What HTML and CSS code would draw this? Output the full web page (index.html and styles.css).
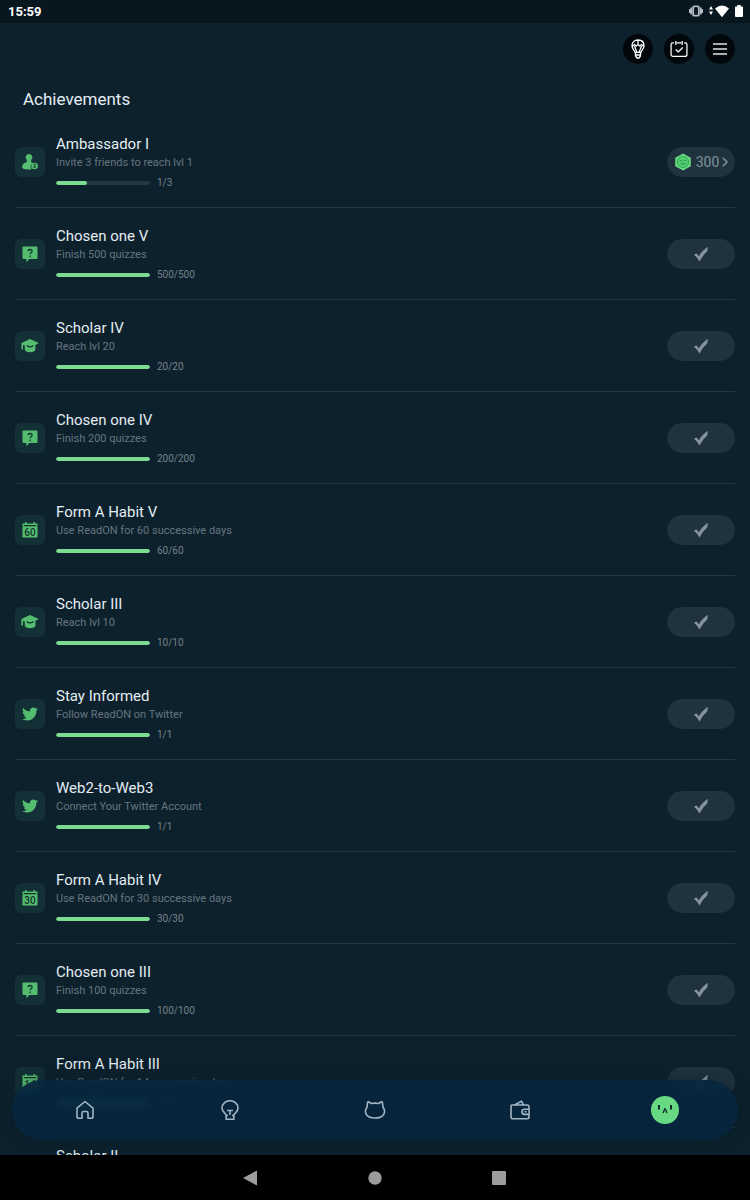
FILE: index.html
```html
<!DOCTYPE html>
<html lang="en">
<head>
<meta charset="utf-8">
<meta name="viewport" content="width=device-width, initial-scale=1">
<title>Achievements</title>
<link rel="stylesheet" href="styles.css">
</head>
<body>
<svg class="sprite" aria-hidden="true">
  <symbol id="person" viewBox="0 0 16 16">
    <path fill="currentColor" d="M7 0a3.400 3.400 0 0 1 2.400 5.800L9 8c1 .3 1.800.6 2.400 1a3.600 3.600 0 0 0-1.600 6.200C3 15.800.1 15 .1 13c0-2.600 1.800-4.200 4.900-5l-.4-2.200A3.400 3.400 0 0 1 7 0z"/>
    <circle cx="12.600" cy="12" r="3.300" fill="currentColor"/>
    <path d="M11.500 11c.2-1.100 2-1 2 .1 0 .8-1.300.8-2 2.100h2.200" fill="none" stroke="#123229"/>
  </symbol>
  <symbol id="quiz" viewBox="0 0 16 16">
    <path fill="currentColor" d="M1.500.5h13a1 1 0 0 1 1 1v10.500a1 1 0 0 1-1 1H7.500L4.300 16v-3H1.500a1 1 0 0 1-1-1V1.500a1 1 0 0 1 1-1z"/>
    <path d="M6 5.100c.2-2.200 4.200-2.100 4.100.2 0 1.500-2 1.400-2 3" fill="none" stroke="#123229" stroke-width="1.300"/>
    <circle cx="8.100" cy="10.300" r=".8" fill="#123229"/>
  </symbol>
  <symbol id="scholar" viewBox="0 0 18 16">
    <path fill="currentColor" d="M9 1 17.800 5 14.400 7v4.500C14.400 15 3.800 15 3.800 11.500V7.500L2 7v4.500H.4V5z"/>
    <path d="M5.800 7.500Q9 10.300 12.400 7.500" fill="none" stroke="#123229" stroke-width="1.200"/>
  </symbol>
  <symbol id="calendar" viewBox="0 0 16 16">
    <path fill="currentColor" d="M3 0h1.500v1.500h7V0H13v1.500h2.500v3.200H.5V1.500H3zM.5 5h15v10.500H.5z"/>
    <path d="M2 3.500h12" stroke="#123229"/>
  </symbol>
  <symbol id="bird" viewBox="0 0 24 24">
    <path fill="currentColor" d="M23.953 4.570a10 10 0 01-2.825.775 4.958 4.958 0 002.163-2.723c-.951.555-2.005.959-3.127 1.184a4.920 4.920 0 00-8.384 4.482C7.690 8.095 4.067 6.130 1.640 3.162a4.822 4.822 0 00-.666 2.475c0 1.710.870 3.213 2.188 4.096a4.904 4.904 0 01-2.228-.616v.060a4.923 4.923 0 003.946 4.827 4.996 4.996 0 01-2.212.085 4.936 4.936 0 004.604 3.417 9.867 9.867 0 01-6.102 2.105c-.390 0-.779-.023-1.170-.067a13.995 13.995 0 007.557 2.209c9.053 0 13.998-7.496 13.998-13.985 0-.210 0-.420-.015-.630A9.935 9.935 0 0024 4.590z"/>
  </symbol>
  <symbol id="check" viewBox="0 0 16 16">
    <path fill="currentColor" d="M.8 8.600 3.600 7.600 6 10.300Q8 5.500 15 .8L14.200 5.500Q9.500 9.500 6.500 15.400Q4 11.500.8 8.600z"/>
  </symbol>
</svg>

<div class="screen">
  <header class="status">
    <span>15:59</span>
    <span class="status-icons">
      <svg width="14" height="12" viewBox="0 0 14 12" fill="none" stroke="#b3bcc1" stroke-width="1.800"><rect x="4.200" y="1.300" width="5.600" height="9.400" rx=".8"/><path d="M2.300 2.500v7M11.700 2.500v7M.7 4v4M13.300 4v4"/></svg>
      <svg width="20" height="14" viewBox="0 0 20 14" fill="#fff"><path d="M2 2 4 5.500H0zM2 11 0 7.500h4zM6 4.500Q13 -1.500 20 4.500L13 13.200z"/></svg>
      <svg width="8" height="14" viewBox="0 0 8 14" fill="#fff"><path d="M2.300 1h3.400v1.500H7a1 1 0 0 1 1 1V12a1 1 0 0 1-1 1H1a1 1 0 0 1-1-1V3.500a1 1 0 0 1 1-1h1.300z"/></svg>
    </span>
  </header>

  <div class="actions">
    <button class="round" aria-label="Tips"><svg width="20" height="20" viewBox="0 0 20 20" fill="none" stroke="#fff" stroke-width="1.300"><path d="M7 13.300C6.600 11 4 10 4 6.800 4 3 6.700 1 10 1s6 2 6 5.800c0 3.200-2.600 4.200-3 6.500zM7.500 14v3l1.500 2h2l1.500-2v-3M7.500 16h5M8.800 13 6.500 7M11.200 13l2.300-6M4.500 7.200l2-1.700L8.300 7 10 5.500 11.700 7l1.800-1.500 2 1.700M10 1v4.500"/></svg></button>
    <button class="round" aria-label="Daily check-in"><svg width="18" height="18" viewBox="0 0 20 20" fill="none" stroke="#fff" stroke-width="1.400"><path d="M4.300 3.300H3A1.800 1.800 0 0 0 1.200 5v11A2.300 2.300 0 0 0 3.500 18.300h13a2.300 2.300 0 0 0 2.300-2.300V5A1.800 1.800 0 0 0 17 3.300h-1.300M7.500 3.300h5M6.500 1v4.500M13.500 1v4.500M6.300 10.500l2.900 2.800 5-5"/></svg></button>
    <button class="round" aria-label="Menu"><svg width="14" height="14" viewBox="0 0 14 14" stroke="#e4e6e8" stroke-width="1.300"><path d="M0 2h14M0 7h14M0 12h14"/></svg></button>
  </div>

  <main>
    <h1>Achievements</h1>
    <ul class="list">
      <li>
        <span class="tile"><svg><use href="#person"/></svg></span>
        <div class="info"><h2>Ambassador I</h2><p>Invite 3 friends to reach lvl 1</p><label><progress max="3" value="1"></progress>1/3</label></div>
        <button class="pill"><svg class="coin" width="18" height="18" viewBox="0 0 18 18"><path d="M9 .4 16.800 4.800v8.400L9 17.600 1.200 13.200V4.800z" fill="#68d77f"/><circle cx="9" cy="9" r="5.600" fill="#50cc6e" stroke="#34ac5c"/><path d="M6 7.500h2M10 7.500h2M6.500 10.200q2.500 3 5 0M8.500 9.500h1" fill="none" stroke="#2a9652"/></svg>300<svg class="chevron" width="6" height="10" viewBox="0 0 6 10" fill="none" stroke="currentColor" stroke-width="1.500"><path d="m.8.8 4.200 4.200L.8 9.200"/></svg></button>
      </li>
      <li>
        <span class="tile"><svg><use href="#quiz"/></svg></span>
        <div class="info"><h2>Chosen one V</h2><p>Finish 500 quizzes</p><label><progress max="500" value="500"></progress>500/500</label></div>
        <button class="pill" aria-label="Claimed"><svg class="tick"><use href="#check"/></svg></button>
      </li>
      <li>
        <span class="tile"><svg class="wide"><use href="#scholar"/></svg></span>
        <div class="info"><h2>Scholar IV</h2><p>Reach lvl 20</p><label><progress max="20" value="20"></progress>20/20</label></div>
        <button class="pill" aria-label="Claimed"><svg class="tick"><use href="#check"/></svg></button>
      </li>
      <li>
        <span class="tile"><svg><use href="#quiz"/></svg></span>
        <div class="info"><h2>Chosen one IV</h2><p>Finish 200 quizzes</p><label><progress max="200" value="200"></progress>200/200</label></div>
        <button class="pill" aria-label="Claimed"><svg class="tick"><use href="#check"/></svg></button>
      </li>
      <li>
        <span class="tile"><svg><use href="#calendar"/></svg><b>60</b></span>
        <div class="info"><h2>Form A Habit V</h2><p>Use ReadON for 60 successive days</p><label><progress max="60" value="60"></progress>60/60</label></div>
        <button class="pill" aria-label="Claimed"><svg class="tick"><use href="#check"/></svg></button>
      </li>
      <li>
        <span class="tile"><svg class="wide"><use href="#scholar"/></svg></span>
        <div class="info"><h2>Scholar III</h2><p>Reach lvl 10</p><label><progress max="10" value="10"></progress>10/10</label></div>
        <button class="pill" aria-label="Claimed"><svg class="tick"><use href="#check"/></svg></button>
      </li>
      <li>
        <span class="tile"><svg><use href="#bird"/></svg></span>
        <div class="info"><h2>Stay Informed</h2><p>Follow ReadON on Twitter</p><label><progress max="1" value="1"></progress>1/1</label></div>
        <button class="pill" aria-label="Claimed"><svg class="tick"><use href="#check"/></svg></button>
      </li>
      <li>
        <span class="tile"><svg><use href="#bird"/></svg></span>
        <div class="info"><h2>Web2-to-Web3</h2><p>Connect Your Twitter Account</p><label><progress max="1" value="1"></progress>1/1</label></div>
        <button class="pill" aria-label="Claimed"><svg class="tick"><use href="#check"/></svg></button>
      </li>
      <li>
        <span class="tile"><svg><use href="#calendar"/></svg><b>30</b></span>
        <div class="info"><h2>Form A Habit IV</h2><p>Use ReadON for 30 successive days</p><label><progress max="30" value="30"></progress>30/30</label></div>
        <button class="pill" aria-label="Claimed"><svg class="tick"><use href="#check"/></svg></button>
      </li>
      <li>
        <span class="tile"><svg><use href="#quiz"/></svg></span>
        <div class="info"><h2>Chosen one III</h2><p>Finish 100 quizzes</p><label><progress max="100" value="100"></progress>100/100</label></div>
        <button class="pill" aria-label="Claimed"><svg class="tick"><use href="#check"/></svg></button>
      </li>
      <li>
        <span class="tile"><svg><use href="#calendar"/></svg><b>14</b></span>
        <div class="info"><h2>Form A Habit III</h2><p>Use ReadON for 14 successive days</p><label><progress max="14" value="14"></progress>14/14</label></div>
        <button class="pill" aria-label="Claimed"><svg class="tick"><use href="#check"/></svg></button>
      </li>
      <li>
        <div class="info indented"><h2>Scholar II</h2></div>
      </li>
    </ul>
    <nav class="tabs" aria-label="Main">
      <a href="#home" aria-label="Home"><svg width="20" height="20" viewBox="0 0 20 20"><path d="M2 8.200 10 1.500l8 6.700V16.500a1.800 1.800 0 0 1-1.800 1.800H13V13a1.500 1.500 0 0 0-1.500-1.500h-3A1.500 1.500 0 0 0 7 13v5.300H3.800A1.800 1.800 0 0 1 2 16.500z"/></svg></a>
      <a href="#learn" aria-label="Learn"><svg width="20" height="20" viewBox="0 0 20 20"><path d="M6.200 15.500C6.200 13.300 2 12.500 2 8a8 7.300 0 0 1 16 0c0 4.500-4.200 5.300-4.200 7.500v3.800H6.200zM6.200 15.500H8M12 15.500h1.800M7 10.500h6M10 10.500V15"/></svg></a>
      <a href="#cat" aria-label="Pets"><svg width="22" height="20" viewBox="0 0 22 20"><path d="M3.600 2.300Q3.800 1.200 5 2L7.500 3.500Q11 2.800 14.500 3.500L17 2Q18.200 1.200 18.400 2.300L19 7.300Q21.500 10.500 20 13.800C18.500 17 15.500 18 11 18S3.500 17 2 13.800Q.5 10.500 3 7.300z"/></svg></a>
      <a href="#wallet" aria-label="Wallet"><svg width="20" height="20" viewBox="0 0 20 20"><path d="M2.500 5h14.800a1.700 1.700 0 0 1 1.700 1.700v10.300a1.700 1.700 0 0 1-1.700 1.700H3A2 2 0 0 1 1 16.700V6.200A1.200 1.200 0 0 1 2.500 5zM5 4.800 11.500 1.200 13.500 4.800M19 9.200h-4.500a2.600 2.600 0 0 0 0 5.200H19zM14.500 11.800h2"/></svg></a>
      <a href="#profile" aria-label="Profile" aria-current="page"><svg class="face" width="28" height="28" viewBox="0 0 28 28"><circle cx="14" cy="14" r="14" fill="#68d983"/><path d="M8 9v4.500M20 9v4.500" stroke="#102c25" stroke-width="2"/><path d="m12 17 2-4.500L16 17" fill="none" stroke="#102c25" stroke-width="1.300"/></svg></a>
    </nav>
  </main>

  <footer class="system">
    <button aria-label="Back"><svg width="16" height="16" viewBox="0 0 16 16"><path d="M0 8 14 .5v15z"/></svg></button>
    <button aria-label="Home screen"><svg width="16" height="16" viewBox="0 0 16 16"><circle cx="8" cy="8" r="6.700"/></svg></button>
    <button aria-label="Recent apps"><svg width="16" height="16" viewBox="0 0 16 16"><rect x="1" y="1" width="14" height="14" rx="1"/></svg></button>
  </footer>
</div>
</body>
</html>
```
FILE: styles.css
```css
* { box-sizing: border-box; }
body, h1, h2, p, ul { margin: 0; padding: 0; }
body { background: #0d212d; color: #e3edf2; font-family: Roboto, "Noto Sans", sans-serif; }
button { border: 0; padding: 0; font: inherit; color: inherit; }
svg { display: block; flex: none; }
.sprite { position: absolute; width: 0; height: 0; }
.screen { height: 100vh; display: flex; flex-direction: column; }

.status {
  height: 23px; padding: 0 7px 0 8px; flex: none;
  display: flex; align-items: center; justify-content: space-between;
  background: #07161f; color: #fff; font-size: 13px; font-weight: 700;
}
.status-icons { display: flex; align-items: center; gap: 6px; padding-bottom: 2px; }

.actions { flex: none; display: flex; justify-content: flex-end; gap: 11px; padding: 11px 15px; }
.round {
  width: 30px; height: 30px; border-radius: 50%; background: #02070b;
  display: grid; place-items: center;
}

main { flex: 1; min-height: 0; position: relative; display: flex; flex-direction: column; }
h1 { font-size: 17px; line-height: 20px; font-weight: 400; padding: 14px 23px 7px; }
.list { list-style: none; flex: 1; min-height: 0; overflow-y: auto; scrollbar-width: none; padding: 0 15px; }
.list li {
  display: flex; align-items: center; gap: 11px;
  padding: 18px 0 17px; border-bottom: 1px solid #263943;
}
.tile {
  width: 30px; height: 30px; border-radius: 6px; flex: none;
  display: grid; place-items: center; background: #123036; color: #55bd70;
}
.tile > * { grid-area: 1 / 1; }
.tile svg { width: 16px; height: 16px; }
.tile .wide { width: 18px; }
.tile b { font-size: 10px; line-height: 10px; padding-top: 5px; font-weight: 500; color: #123229; }
.info { flex: 1; min-width: 0; }
.indented { padding-left: 41px; }
h2 { font-size: 15px; line-height: 20px; font-weight: 400; }
.info p { font-size: 11px; line-height: 16px; padding-top: 1px; color: #66757e; }
.info label {
  display: flex; align-items: center; gap: 7px; padding-top: 5px;
  font-size: 10px; line-height: 14px; color: #75828a;
}
progress {
  appearance: none; width: 94px; height: 4px; border: 0; border-radius: 2px;
  overflow: hidden; background: #263743;
}
progress::-webkit-progress-bar { background: #263743; }
progress::-webkit-progress-value { background: #7bdb91; border-radius: 2px; }
.pill {
  width: 68px; height: 30px; border-radius: 15px; flex: none; background: #1f323d; color: #84939b;
  display: flex; align-items: center; justify-content: center; font-size: 14px;
}
.coin { margin-right: 4px; }
.chevron { margin-left: 3px; }
.tick { width: 16px; height: 16px; }

.tabs {
  position: absolute; left: 12px; right: 12px; bottom: 15px; height: 60px; border-radius: 30px;
  display: flex; align-items: center;
  background: rgba(5, 38, 62, 0.9); backdrop-filter: blur(5px);
  box-shadow: 0 0 20px rgba(5, 24, 34, 0.35);
}
.tabs a { flex: 1; display: grid; place-items: center; }
.tabs svg { fill: none; stroke: #a2b5c4; stroke-width: 1.6; stroke-linejoin: round; }
.tabs .face { stroke: none; }

.system {
  flex: none; height: 45px; background: #000;
  display: flex; align-items: center; justify-content: center; gap: 108px;
}
.system button { background: none; }
.system svg { fill: #9c9c9c; }
```
